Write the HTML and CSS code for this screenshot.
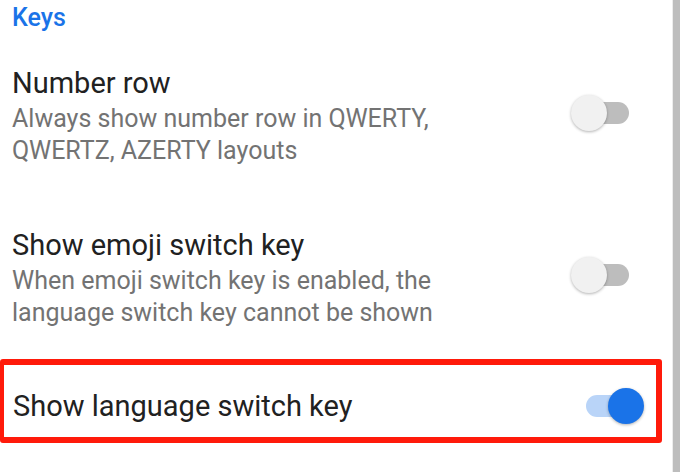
FILE: index.html
```html
<!DOCTYPE html>
<html>
<head>
<meta charset="utf-8">
<link rel="stylesheet" href="styles.css">
</head>
<body>
<div class="screen">
  <div class="content">
    <div class="section-title">Keys</div>
    <div class="row first">
      <div class="texts">
        <div class="title">Number row</div>
        <div class="desc">Always show number row in QWERTY,<br>QWERTZ, AZERTY layouts</div>
      </div>
      <div class="switch off"><span class="track"></span><span class="thumb"></span></div>
    </div>
    <div class="row second">
      <div class="texts">
        <div class="title">Show emoji switch key</div>
        <div class="desc">When emoji switch key is enabled, the<br>language switch key cannot be shown</div>
      </div>
      <div class="switch off"><span class="track"></span><span class="thumb"></span></div>
    </div>
    <div class="highlight">
      <div class="texts">
        <div class="title">Show language switch key</div>
      </div>
      <div class="switch on"><span class="track"></span><span class="thumb"></span></div>
    </div>
  </div>
  <div class="scrollbar"></div>
</div>
</body>
</html>
```

FILE: styles.css
```css
html, body {
  margin: 0;
  padding: 0;
  background: #ffffff;
}
body {
  font-family: Roboto, "Noto Sans", sans-serif;
  width: 680px;
  height: 472px;
  overflow: hidden;
}
.screen {
  display: flex;
  height: 472px;
}
.content {
  flex: 1;
  display: flex;
  flex-direction: column;
}
.scrollbar {
  width: 7px;
  background: #bdbdbd;
  border-left: 1px solid #ececec;
}
.section-title {
  color: #1a73e8;
  font-size: 25px;
  font-weight: 500;
  padding: 3px 0 0 12px;
  line-height: 30px;
}
.row {
  display: flex;
  align-items: flex-start;
  justify-content: space-between;
  padding: 0 31px 0 12px;
}
.row .switch {
  margin-top: 29px;
}
.first {
  margin-top: 33px;
}
.second {
  margin-top: 61px;
}
.title {
  color: #212121;
  font-size: 29px;
  line-height: 34px;
}
.desc {
  color: #737373;
  font-size: 25px;
  line-height: 32px;
  margin-top: 3px;
}
.highlight {
  display: flex;
  align-items: center;
  justify-content: space-between;
  margin-top: 30px;
  height: 62px;
  padding: 10px 12px 0 9px;
  border: 6px solid #ff1a0a;
  border-left-width: 4px;
  border-radius: 3px;
  margin-right: 10px;
}
.switch {
  position: relative;
  width: 70px;
  height: 36px;
  flex: none;
}
.track {
  position: absolute;
  left: 12px;
  top: 7px;
  width: 46px;
  height: 22px;
  border-radius: 11px;
}
.thumb {
  position: absolute;
  top: 0;
  width: 36px;
  height: 36px;
  border-radius: 50%;
  box-shadow: 0 1px 3px rgba(0,0,0,0.3);
}
.off .track {
  background: #bdbdbd;
}
.off .thumb {
  left: 0;
  background: #f1f1f1;
}
.on .track {
  background: #b9d4f8;
}
.on .thumb {
  left: 34px;
  background: #1a73e8;
}
```
